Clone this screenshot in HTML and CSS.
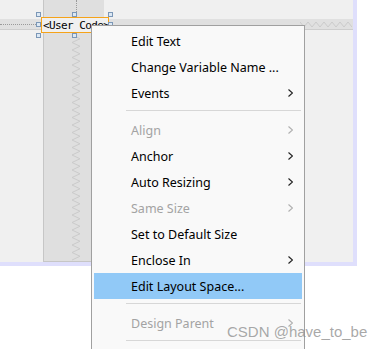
FILE: index.html
```html
<!DOCTYPE html>
<html lang="en">
<head>
    <meta charset="UTF-8">
    <title>Form Designer</title>
    <link rel="stylesheet" href="styles.css">
</head>
<body>
    <div class="stage">
        <div class="canvas">
            <div class="column">
                <svg class="zigzag-v" width="10" height="226" viewBox="0 0 10 226">
                    <polyline points="1,0 9,3.75 1,7.5 9,11.25 1,15 9,18.75 1,22.5 9,26.25 1,30 9,33.75 1,37.5 9,41.25 1,45 9,48.75 1,52.5 9,56.25 1,60 9,63.75 1,67.5 9,71.25 1,75 9,78.75 1,82.5 9,86.25 1,90 9,93.75 1,97.5 9,101.25 1,105 9,108.75 1,112.5 9,116.25 1,120 9,123.75 1,127.5 9,131.25 1,135 9,138.75 1,142.5 9,146.25 1,150 9,153.75 1,157.5 9,161.25 1,165 9,168.75 1,172.5 9,176.25 1,180 9,183.75 1,187.5 9,191.25 1,195 9,198.75 1,202.5 9,206.25 1,210 9,213.75 1,217.5 9,221.25 1,225"/>
                </svg>
            </div>
            <div class="band">
                <svg class="zigzag-h" width="52" height="11" viewBox="0 0 52 11">
                    <polyline points="0,3 4,8 8,3 12,8 16,3 20,8 24,3 28,8 32,3 36,8 40,3 44,8 48,3 52,8"/>
                </svg>
            </div>
            <div class="guide-v"></div>
            <div class="guide-h"></div>
            <div class="label">&lt;User Code&gt;</div>
            <span class="handle h-tl"></span>
            <span class="handle h-tm"></span>
            <span class="handle h-tr"></span>
            <span class="handle h-ml"></span>
            <span class="handle h-mr"></span>
            <span class="handle h-bl"></span>
            <span class="handle h-bm"></span>
            <span class="handle h-br"></span>
        </div>

        <ul class="menu">
            <li class="item">Edit Text</li>
            <li class="item">Change Variable Name ...</li>
            <li class="item">Events <svg class="arrow" width="5" height="8"><polyline points="0.5,0.5 4.5,4 0.5,7.5"/></svg></li>
            <li class="sep"></li>
            <li class="item disabled">Align <svg class="arrow" width="5" height="8"><polyline points="0.5,0.5 4.5,4 0.5,7.5"/></svg></li>
            <li class="item">Anchor <svg class="arrow" width="5" height="8"><polyline points="0.5,0.5 4.5,4 0.5,7.5"/></svg></li>
            <li class="item">Auto Resizing <svg class="arrow" width="5" height="8"><polyline points="0.5,0.5 4.5,4 0.5,7.5"/></svg></li>
            <li class="item disabled">Same Size <svg class="arrow" width="5" height="8"><polyline points="0.5,0.5 4.5,4 0.5,7.5"/></svg></li>
            <li class="item">Set to Default Size</li>
            <li class="item">Enclose In <svg class="arrow" width="5" height="8"><polyline points="0.5,0.5 4.5,4 0.5,7.5"/></svg></li>
            <li class="item active">Edit Layout Space...</li>
            <li class="sep"></li>
            <li class="item disabled">Design Parent <svg class="arrow" width="5" height="8"><polyline points="0.5,0.5 4.5,4 0.5,7.5"/></svg></li>
            <li class="sep"></li>
            <li class="item"></li>
        </ul>

        <div class="watermark">CSDN @have_to_be</div>
    </div>
</body>
</html>
```

FILE: styles.css
```css
body {
    margin: 0;
    background: #fff;
    overflow: hidden;
}
.stage {
    position: relative;
    width: 382px;
    height: 349px;
    overflow: hidden;
}
.canvas {
    position: relative;
    width: 353px;
    height: 262px;
    background: #f0f0f0;
    border-right: 4px solid #dfdffc;
    border-bottom: 4px solid #dfdffc;
}

/* designer objects on the canvas */
.column {
    position: absolute;
    left: 43px;
    top: 0;
    width: 60px;
    height: 261px;
    background: #dfdfdf;
    border-left: 1px solid #c6c6c6;
    border-bottom: 1px solid #c6c6c6;
}
.zigzag-v {
    position: absolute;
    left: 27px;
    top: 35px;
}
.zigzag-v polyline,
.zigzag-h polyline {
    fill: none;
    stroke: #cbcbcb;
    stroke-width: 1;
}
.band {
    position: absolute;
    left: 0;
    top: 19px;
    width: 353px;
    height: 10px;
    background: #e0e0e0;
    border-bottom: 1px solid #cdcdcd;
}
.zigzag-h {
    position: absolute;
    left: 300px;
    top: 0;
}
.guide-v {
    position: absolute;
    left: 76px;
    top: 0;
    height: 12px;
    border-left: 1px dotted #9a9a9a;
}
.guide-h {
    position: absolute;
    left: 0;
    top: 24px;
    width: 36px;
    border-top: 1px dotted #9a9a9a;
}
.label {
    position: absolute;
    left: 41px;
    top: 17px;
    width: 65px;
    height: 14px;
    border: 1px solid #f5a31a;
    background: #f0f0f0;
    font-family: "DejaVu Sans Mono", monospace;
    font-size: 11px;
    letter-spacing: -0.6px;
    line-height: 15px;
    color: #000;
    padding-left: 1px;
    white-space: nowrap;
    overflow: hidden;
}
.handle {
    position: absolute;
    width: 3px;
    height: 3px;
    background: #dce8f4;
    border: 1px solid #7b97b7;
}
.h-tl { left: 36px; top: 12px; }
.h-tm { left: 72px; top: 12px; }
.h-tr { left: 108px; top: 12px; }
.h-ml { left: 36px; top: 22px; }
.h-mr { left: 108px; top: 22px; }
.h-bl { left: 36px; top: 33px; }
.h-bm { left: 72px; top: 33px; }
.h-br { left: 108px; top: 33px; }

/* context menu */
.menu {
    position: absolute;
    left: 91px;
    top: 25px;
    width: 208px;
    margin: 0;
    padding: 2px;
    list-style: none;
    background: #f9f9f9;
    border: 1px solid #a0a0a0;
    font-family: "Noto Sans", sans-serif;
    font-size: 12.5px;
    color: #000;
}
.item {
    display: flex;
    align-items: center;
    justify-content: space-between;
    height: 26px;
    padding: 0 9px 0 37px;
    white-space: nowrap;
}
.item.disabled {
    color: #a3a3a3;
}
.item.active {
    background: #91c9f7;
}
.arrow polyline {
    fill: none;
    stroke: #222;
    stroke-width: 1.2;
}
.disabled .arrow polyline {
    stroke: #b0b0b0;
}
.sep {
    height: 1px;
    margin: 4px 1px 6px 32px;
    background: #d7d7d7;
}
.watermark {
    position: absolute;
    left: 227px;
    top: 323px;
    font-family: "Liberation Sans", Arial, sans-serif;
    font-size: 15px;
    color: rgba(140, 140, 140, 0.75);
    white-space: nowrap;
}
```
